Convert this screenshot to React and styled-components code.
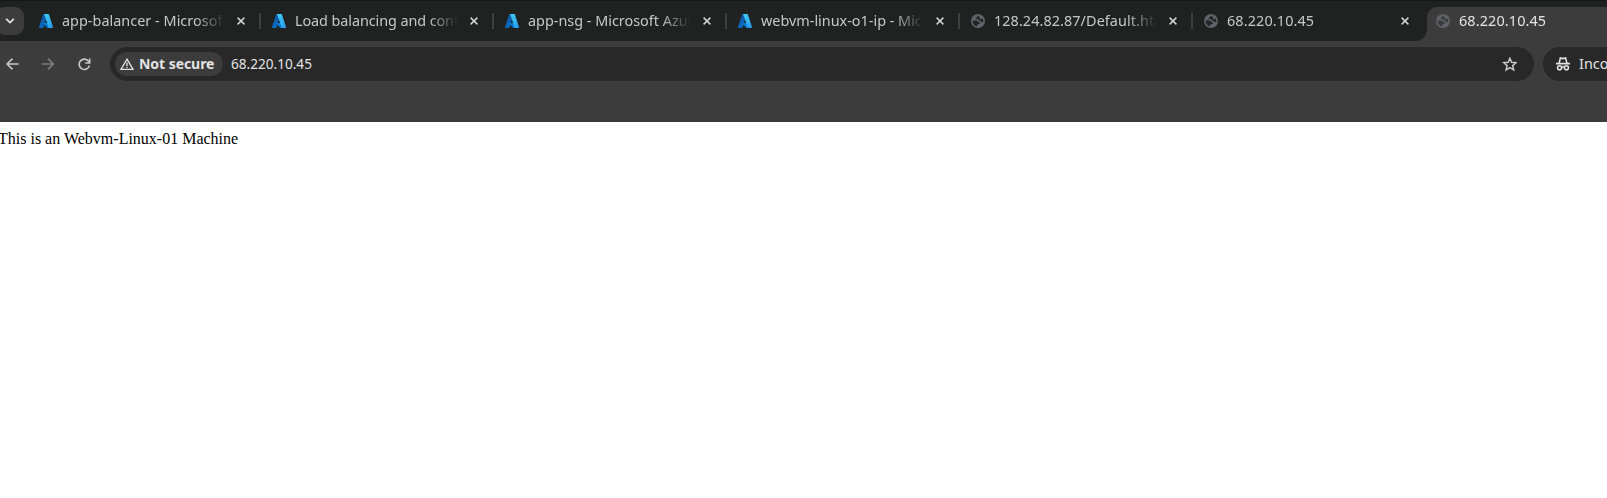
import React from 'react';
import styled, { createGlobalStyle } from 'styled-components';

const Global = createGlobalStyle`
  body { margin: 0; background: #fff; overflow: hidden; }
  * { box-sizing: border-box; }
`;

const Window = styled.div`
  width: 100%;
  height: 498px;
  overflow: hidden;
  background: #fff;
`;

const Chrome = styled.header`
  height: 122px;
  background: #3c3c3c;
  font-family: "Noto Sans", "Open Sans", sans-serif;
`;

const TabStrip = styled.div`
  display: flex;
  height: 41px;
  background: #202222;
  border-top: 1px solid #161818;
  overflow: hidden;
`;

const TabSearch = styled.button`
  flex: none;
  display: flex;
  align-items: center;
  justify-content: center;
  width: 28px;
  height: 28px;
  margin: 6px 4px 0 -4px;
  padding: 0;
  border: 0;
  border-radius: 9px;
  background: #3c3c3c;
  color: #e3e3e3;
`;

const Tab = styled.div`
  position: relative;
  flex: none;
  display: flex;
  align-items: center;
  width: 233px;
  height: 40px;
  padding-left: 11px;
  color: #c7c7c7;
`;

const ActiveTab = styled(Tab)`
  height: 34px;
  margin: 6px 0 0 1px;
  padding: 0 0 6px 9px;
  border-radius: 10px 0 0 0;
  background: #3c3c3c;
  color: #e3e3e3;
  &::before {
    content: "";
    position: absolute;
    left: -12px;
    bottom: 0;
    width: 12px;
    height: 12px;
    background: radial-gradient(circle at 0 0, transparent 11.5px, #3c3c3c 12.5px);
  }
`;

const Title = styled.span`
  width: ${p => p.$width || 163}px;
  margin-left: 9px;
  overflow: hidden;
  white-space: nowrap;
  font-size: 14.4px;
  line-height: 22px;
  letter-spacing: ${p => p.$track || 0}px;
  mask-image: linear-gradient(to right, #000 calc(100% - 30px), transparent);
`;

const CloseButton = styled.button`
  display: flex;
  padding: 0;
  margin-left: 12px;
  border: 0;
  background: none;
  color: #d0d0d0;
`;

const Separator = styled.i`
  width: 2px;
  height: 16px;
  margin-left: auto;
  background: #3e4040;
`;

const Toolbar = styled.div`
  display: flex;
  align-items: center;
  height: 34px;
  margin-top: 6px;
`;

const NavButton = styled.button`
  flex: none;
  display: flex;
  justify-content: center;
  width: 36px;
  padding: 0;
  border: 0;
  background: none;
  color: ${p => (p.$dim ? '#7c7c7c' : '#c7c7c7')};
`;

const Nav = styled.nav`
  display: flex;
  flex: none;
  width: 110px;
  margin-left: -6px;
`;

const AddressBar = styled.div`
  flex: none;
  display: flex;
  align-items: center;
  width: 1424px;
  height: 34px;
  margin-left: 6px;
  padding: 0 17px 0 5px;
  border-radius: 17px;
  background: #282828;
  color: #e3e3e3;
`;

const SecurityChip = styled.div`
  display: flex;
  align-items: center;
  gap: 5px;
  width: 108px;
  height: 24px;
  padding-left: 5px;
  border-radius: 12px;
  background: #3c3c3c;
  font-size: 14px;
  line-height: 22px;
  font-weight: 700;
  letter-spacing: -0.05px;
  white-space: nowrap;
`;

const ChipLabel = styled.span`
  padding-bottom: 1px;
`;

const Url = styled.span`
  flex: 1;
  margin-left: 8px;
  padding-bottom: 1px;
  font-size: 13.6px;
  line-height: 19px;
`;

const IncognitoChip = styled.div`
  flex: none;
  display: flex;
  align-items: center;
  gap: 9px;
  width: 120px;
  height: 34px;
  margin-left: 9px;
  padding-left: 13px;
  border-radius: 17px;
  background: #282828;
  color: #e3e3e3;
  font-size: 14.4px;
  line-height: 22px;
`;

const Page = styled.main`
  padding-top: 8px;
  margin-left: -2px;
  color: #000;
  font: 16px/18px "Liberation Serif", "Times New Roman", serif;
`;

const Icon = styled.svg`
  flex: none;
  display: block;
`;

const Azure = () => (
  <Icon width="14" height="14" viewBox="4 6 88 84" preserveAspectRatio="none">
    <defs>
      <linearGradient id="azL" x1="0.6" y1="0" x2="0.3" y2="1"><stop stopColor="#1157a0" /><stop offset="1" stopColor="#0a68c0" /></linearGradient>
      <linearGradient id="azR" x1="0.3" y1="0" x2="0.7" y2="1"><stop stopColor="#3ccbf4" /><stop offset="1" stopColor="#2c9ceb" /></linearGradient>
    </defs>
    <path fill="url(#azL)" d="M33.338 6.544h26.038l-27.03 80.087a4.152 4.152 0 0 1-3.933 2.824H8.149a4.145 4.145 0 0 1-3.928-5.47L29.404 9.368a4.152 4.152 0 0 1 3.934-2.825z" />
    <path fill="#0078d4" d="M71.175 60.261h-41.29a1.911 1.911 0 0 0-1.305 3.309l26.532 24.764a4.171 4.171 0 0 0 2.846 1.121h23.38z" />
    <path fill="url(#azR)" d="M66.595 9.364a4.145 4.145 0 0 0-3.928-2.82H33.648a4.146 4.146 0 0 1 3.928 2.82l25.184 74.62a4.146 4.146 0 0 1-3.928 5.472h29.02a4.146 4.146 0 0 0 3.927-5.472z" />
  </Icon>
);

const Globe = ({ cut = '#222425' }) => (
  <Icon width="14" height="14" viewBox="0 0 14 14">
    <circle cx="7" cy="7" r="7" fill="#5f6368" />
    <path fill={cut} d="M1.6 6.6H5.2C6.6 6.6 7.4 7.4 7.4 8.6H9V10H6.6V12.3C3.6 12.3 1.5 9.8 1.6 6.6ZM8.1 1.8C6.8 1.8 6 2.3 6 3.4H4.7V5H7.2V6.2H8.8C9.4 7.6 10.2 8.2 12.2 8.1C12.6 6.9 12.2 5.4 11.4 4.2L10.8 5.2H9.2V3.6H8.1Z" />
  </Icon>
);

const CloseIcon = () => (
  <Icon width="8" height="8" viewBox="0 0 8 8" fill="none" stroke="currentColor" strokeWidth="1.5">
    <path d="M.6.6 7.4 7.4M7.4.6.6 7.4" />
  </Icon>
);

const tabs = [
  ['app-balancer - Microsoft Azure', Azure, 0.03],
  ['Load balancing and content delivery', Azure, -0.08],
  ['app-nsg - Microsoft Azure', Azure, 0],
  ['webvm-linux-o1-ip - Microsoft Azure', Azure, 0],
  ['128.24.82.87/Default.html', Globe, 0.08],
  ['68.220.10.45', Globe, 0.13, 162],
];

export default function App() {
  return (
    <Window>
      <Global />
      <Chrome>
        <TabStrip>
          <TabSearch aria-label="Search tabs">
            <Icon width="10" height="6" viewBox="0 0 10 6" fill="none" stroke="currentColor" strokeWidth="1.8"><path d="M1.2 .8 5 4.6 8.8 .8" /></Icon>
          </TabSearch>
          {tabs.map(([title, Favicon, track, width], i) => (
            <Tab key={title}>
              <Favicon />
              <Title $track={track} $width={width}>{title}</Title>
              <CloseButton aria-label="Close tab"><CloseIcon /></CloseButton>
              {i < 5 && <Separator />}
            </Tab>
          ))}
          <ActiveTab>
            <Globe cut="#3c3c3c" />
            <Title $track={0.13}>68.220.10.45</Title>
          </ActiveTab>
        </TabStrip>
        <Toolbar>
          <Nav>
            <NavButton aria-label="Back"><Icon width="13" height="12" viewBox="0 0 13 12" fill="none" stroke="currentColor" strokeWidth="1.6"><path d="M6.5.6 1.1 6 6.5 11.4M1.1 6H12.5" /></Icon></NavButton>
            <NavButton $dim aria-label="Forward"><Icon width="13" height="12" viewBox="0 0 13 12" fill="none" stroke="currentColor" strokeWidth="1.6"><path d="M6 .6 11.4 6 6 11.4M11.4 6H0" /></Icon></NavButton>
            <NavButton aria-label="Reload"><Icon width="13" height="13" viewBox="0 0 13 13" fill="none" stroke="currentColor" strokeWidth="1.6"><path d="M11.4 7.6A5.2 5.2 0 1 1 10.6 3.3L11.6 4.9M11.7.5V5H7.2" /></Icon></NavButton>
          </Nav>
          <AddressBar>
            <SecurityChip>
              <Icon width="14" height="12" viewBox="0 0 14 12" fill="none" stroke="currentColor" strokeWidth="1.3"><path d="M7 1.2 13 11.3H1ZM7 4.6V8M7 8.8V10.1" /></Icon>
              <ChipLabel>Not secure</ChipLabel>
            </SecurityChip>
            <Url>68.220.10.45</Url>
            <Icon width="15" height="15" viewBox="0 0 15 15" fill="none" stroke="#c7c7c7" strokeWidth="1.5"><path d="M7.9 1.3 9.6 5.3 14 5.7 10.7 8.6 11.7 12.9 7.9 10.6 4.1 12.9 5.1 8.6 1.8 5.7 6.2 5.3Z" /></Icon>
          </AddressBar>
          <IncognitoChip>
            <Icon width="14" height="14" viewBox="0 0 14 14" fill="none" stroke="currentColor" strokeWidth="1.6">
              <path d="M0 6.6H14M3.1 6.1 4.4 1 7 1.6 9.6 1 10.9 6.1M5.6 10.1Q7 9.3 8.4 10.1" />
              <circle cx="3.6" cy="10.8" r="2" /><circle cx="10.4" cy="10.8" r="2" />
            </Icon>
            <ChipLabel>Incognito</ChipLabel>
          </IncognitoChip>
        </Toolbar>
      </Chrome>
      <Page>This is an Webvm-Linux-01 Machine</Page>
    </Window>
  );
}
